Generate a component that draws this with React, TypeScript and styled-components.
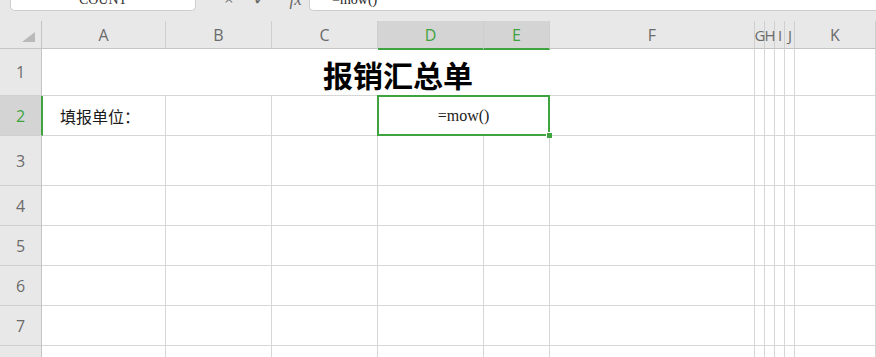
import React from "react";
import styled, { createGlobalStyle } from "styled-components";

const GlobalStyle = createGlobalStyle`
  html, body {
    margin: 0;
    padding: 0;
    background: #ffffff;
    overflow: hidden;
  }
  body {
    font-family: "Noto Sans", "Noto Sans CJK SC", sans-serif;
  }
`;

const GREEN = "#3fa33f";
const LINE = "#d6d6d6";
const HEAD_BG = "#e8e8e8";
const HEAD_SEL = "#d4d4d4";

const columns = [
  { key: "A", width: 124 },
  { key: "B", width: 106 },
  { key: "C", width: 106 },
  { key: "D", width: 106 },
  { key: "E", width: 66 },
  { key: "F", width: 205 },
  { key: "G", width: 10 },
  { key: "H", width: 10 },
  { key: "I", width: 10 },
  { key: "J", width: 10 },
  { key: "K", width: 81 },
];

const rowHeights = [47, 40, 50, 40, 40, 40, 40, 40];

const Page = styled.div`
  width: 876px;
  height: 357px;
  background: ${HEAD_BG};
  overflow: hidden;
`;

const FormulaBar = styled.div`
  height: 21px;
  display: flex;
  align-items: flex-start;
  background: ${HEAD_BG};
`;

const NameBox = styled.div`
  margin-left: 10px;
  width: 184px;
  height: 10px;
  background: #fff;
  border: 1px solid #cdcdcd;
  border-top: none;
  border-radius: 0 0 5px 5px;
  overflow: hidden;
  text-align: center;
  font-family: "Liberation Serif", serif;
  font-size: 14px;
  line-height: 0;
  color: #333;
`;

const BarIcons = styled.div`
  display: flex;
  gap: 19px;
  margin-left: 28px;
  width: 85px;
  height: 10px;
  overflow: hidden;
  color: #666;
  font-family: "Liberation Serif", serif;
  font-size: 17px;
  line-height: 0;
`;

const FxIcon = styled.span`
  font-style: italic;
  margin-left: 4px;
`;

const FormulaInput = styled.div`
  flex: 1;
  height: 10px;
  background: #fff;
  border: 1px solid #cdcdcd;
  border-top: none;
  border-right: none;
  border-radius: 0 0 0 5px;
  overflow: hidden;
  padding-left: 22px;
  font-family: "Liberation Serif", serif;
  font-size: 14px;
  line-height: 0;
  color: #222;
`;

const Sheet = styled.div`
  display: grid;
  grid-template-columns: 42px ${columns.map((c) => c.width + "px").join(" ")};
  grid-template-rows: 28px ${rowHeights.map((h) => h + "px").join(" ")};
  background: #fff;
  width: 876px;
`;

const Corner = styled.div`
  background: ${HEAD_BG};
  border-right: 1px solid #c4c4c4;
  border-bottom: 1px solid #c4c4c4;
  display: flex;
  align-items: flex-end;
  justify-content: flex-end;
  padding: 0 6px 6px 0;
`;

const ColHead = styled.div<{ $sel?: boolean; $narrow?: boolean }>`
  background: ${(p) => (p.$sel ? HEAD_SEL : HEAD_BG)};
  border-right: 1px solid #cfcfcf;
  border-bottom: ${(p) => (p.$sel ? `2px solid ${GREEN}` : "1px solid #c4c4c4")};
  margin-bottom: ${(p) => (p.$sel ? "-1px" : "0")};
  color: ${(p) => (p.$sel ? GREEN : "#6b6b6b")};
  font-family: "Open Sans", "Noto Sans", sans-serif;
  font-size: ${(p) => (p.$narrow ? "15px" : "16px")};
  display: flex;
  align-items: center;
  justify-content: center;
  overflow: visible;
  white-space: nowrap;
  letter-spacing: ${(p) => (p.$narrow ? "-1px" : "0")};
`;

const RowHead = styled.div<{ $sel?: boolean }>`
  background: ${(p) => (p.$sel ? HEAD_SEL : HEAD_BG)};
  border-right: ${(p) => (p.$sel ? `2px solid ${GREEN}` : "1px solid #c4c4c4")};
  margin-right: ${(p) => (p.$sel ? "-1px" : "0")};
  border-bottom: 1px solid #d0d0d0;
  color: ${(p) => (p.$sel ? GREEN : "#6b6b6b")};
  font-family: "Open Sans", "Noto Sans", sans-serif;
  font-size: 16px;
  display: flex;
  align-items: center;
  justify-content: center;
  position: relative;
  z-index: 1;
`;

const Cell = styled.div<{ $span?: number }>`
  grid-column: span ${(p) => p.$span || 1};
  border-right: 1px solid ${LINE};
  border-bottom: 1px solid ${LINE};
  display: flex;
  align-items: center;
  position: relative;
`;

const Title = styled(Cell)`
  justify-content: center;
  padding-top: 4px;
  font-family: "Noto Sans CJK SC", sans-serif;
  font-weight: 700;
  font-size: 30px;
  color: #000;
`;

const Label = styled(Cell)`
  padding-left: 18px;
  font-family: "Noto Sans CJK SC", sans-serif;
  font-size: 16px;
  color: #1a1a1a;
`;

const Selected = styled(Cell)`
  justify-content: center;
  font-family: "Liberation Serif", serif;
  font-size: 16px;
  color: #222;
  &::after {
    content: "";
    position: absolute;
    top: -1px;
    left: -1px;
    right: -1px;
    bottom: -1px;
    border: 2px solid ${GREEN};
    pointer-events: none;
  }
`;

const FillHandle = styled.span`
  position: absolute;
  right: -3px;
  bottom: -3px;
  width: 5px;
  height: 5px;
  background: ${GREEN};
  border-left: 1px solid #fff;
  border-top: 1px solid #fff;
  z-index: 2;
`;

const Triangle = () => (
  <svg width="13" height="10" viewBox="0 0 13 10">
    <polygon points="13,0 13,10 0,10" fill="#b9b9b9" />
  </svg>
);

const blanks = (keys: string[], row: number) =>
  keys.map((k) => <Cell key={k + row} />);

const App = () => {
  const keys = columns.map((c) => c.key);
  return (
    <Page>
      <GlobalStyle />
      <FormulaBar>
        <NameBox>COUNT</NameBox>
        <BarIcons>
          <span>×</span>
          <span>✓</span>
          <FxIcon>fx</FxIcon>
        </BarIcons>
        <FormulaInput>=mow()</FormulaInput>
      </FormulaBar>
      <Sheet>
        <Corner>
          <Triangle />
        </Corner>
        {columns.map((c) => (
          <ColHead
            key={c.key}
            $sel={c.key === "D" || c.key === "E"}
            $narrow={c.width <= 10}
          >
            {c.key}
          </ColHead>
        ))}

        <RowHead>1</RowHead>
        <Title $span={6}>报销汇总单</Title>
        {blanks(keys.slice(6), 1)}

        <RowHead $sel>2</RowHead>
        <Label>填报单位：</Label>
        <Cell />
        <Cell />
        <Selected $span={2}>
          =mow()
          <FillHandle />
        </Selected>
        {blanks(keys.slice(5), 2)}

        {[3, 4, 5, 6, 7, 8].map((r) => (
          <React.Fragment key={r}>
            <RowHead>{r}</RowHead>
            {blanks(keys, r)}
          </React.Fragment>
        ))}
      </Sheet>
    </Page>
  );
};

export default App;
